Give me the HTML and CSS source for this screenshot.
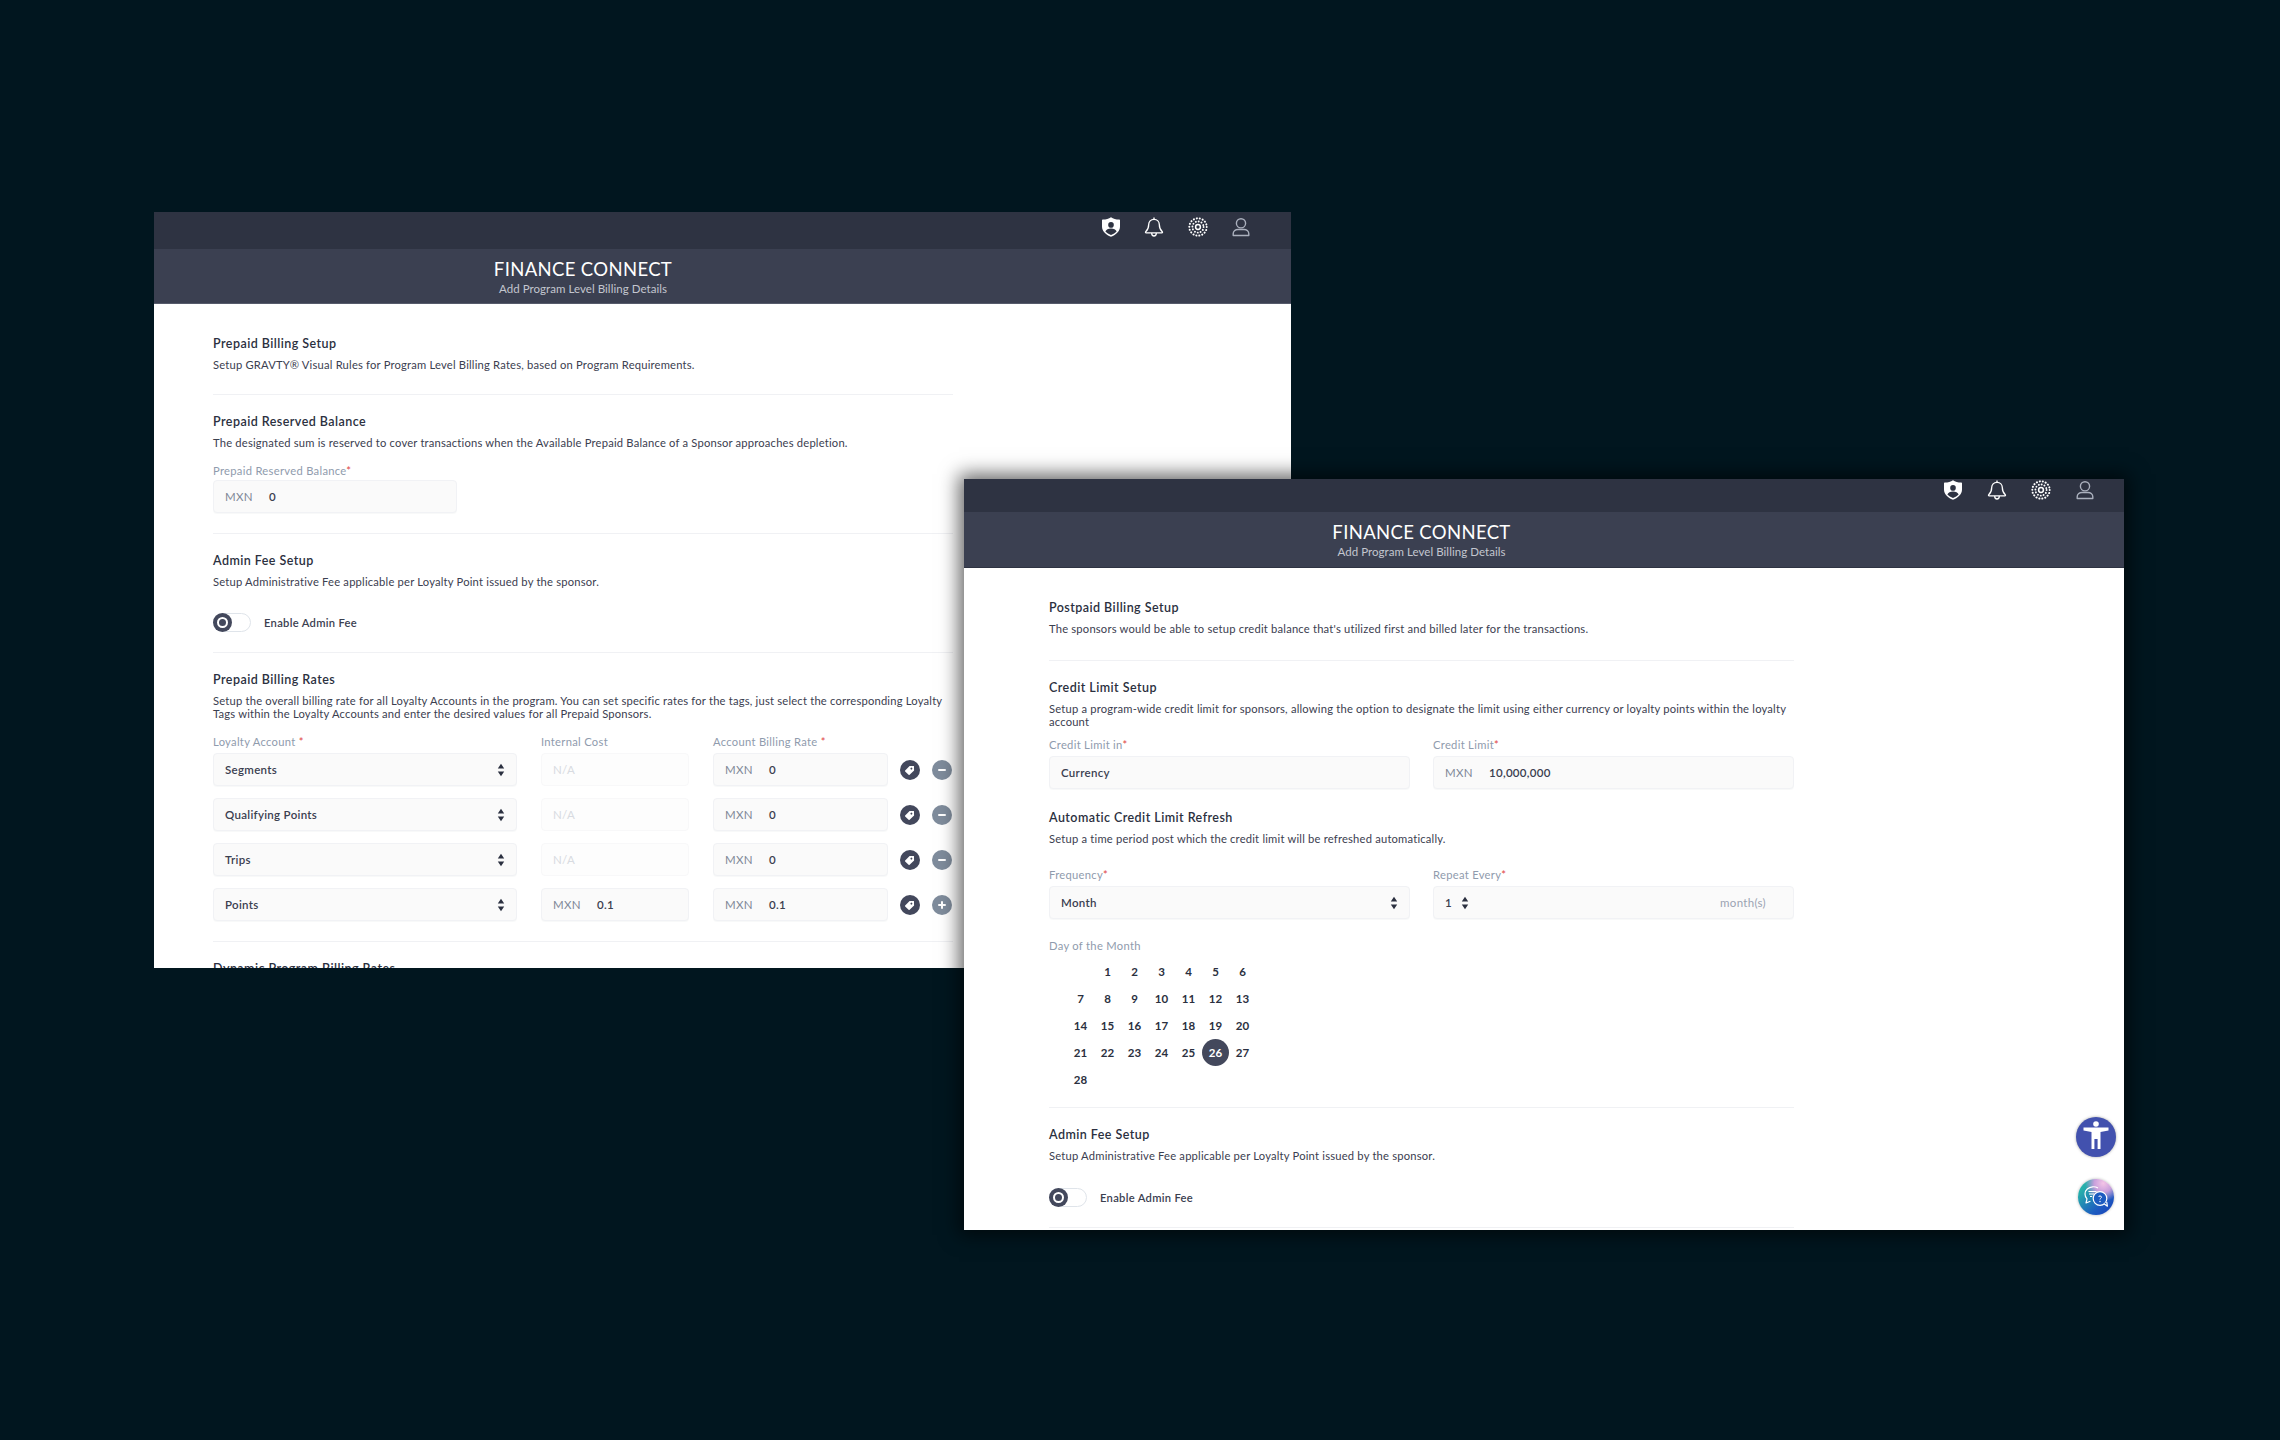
FILE: index.html
```html
<!DOCTYPE html>
<html lang="en">
<head>
  <meta charset="UTF-8" />
  <title>Finance Connect - Billing Details</title>
  <link rel="stylesheet" href="styles.css">
</head>
<body>
  <svg class="icon-defs" width="0" height="0">
    <symbol id="i-shield" viewBox="0 0 20 20">
      <path fill="#fff" d="M10 .2c2.300 1.600 4.800 2.300 8.300 2.400.4 0 .7.300.7.700v6.300c0 4.600-3.700 8.200-9 10.200-5.300-2-9-5.600-9-10.200V3.300c0-.4.300-.7.700-.7C5.200 2.500 7.700 1.800 10 .2z"/>
      <circle cx="10" cy="7.900" r="2.800" fill="#2e3342"/>
      <path fill="#2e3342" d="M4.400 14.500c.6-2 3-3.100 5.600-3.100s5 1.100 5.600 3.100c-1.400 1.400-3.300 2.500-5.600 3.400-2.300-.9-4.200-2-5.600-3.400z"/>
    </symbol>
    <symbol id="i-bell" viewBox="0 0 20 20">
      <path fill="none" stroke="#fff" stroke-width="1.300" stroke-linejoin="round" d="M10 2.300c-3.300 0-5.300 2.400-5.300 5.300 0 3.700-1.200 5.600-3 7.200-.4.400-.2 1 .4 1h15.800c.6 0 .8-.6.400-1-1.800-1.600-3-3.500-3-7.200 0-2.900-2-5.300-5.300-5.300z"/>
      <path fill="none" stroke="#fff" stroke-width="1.300" d="M10 .6v1.700M7.700 15.900c0 2 1.100 3.100 2.300 3.100s2.300-1.100 2.300-3.100"/>
    </symbol>
    <symbol id="i-gear" viewBox="0 0 20 20">
      <circle cx="10" cy="10" r="8.700" fill="none" stroke="#fff" stroke-width="2" stroke-linecap="round" stroke-dasharray="0.100 2.937"/>
      <circle cx="10" cy="10" r="5.600" fill="none" stroke="#fff" stroke-width="1.900" stroke-linecap="round" stroke-dasharray="0.100 2.830"/>
      <circle cx="10" cy="10" r="2.400" fill="none" stroke="#fff" stroke-width="1.500"/>
    </symbol>
    <symbol id="i-user" viewBox="0 0 20 20">
      <circle cx="10" cy="6.300" r="4.600" fill="none" stroke="#aab0bd" stroke-width="1.400"/>
      <path fill="none" stroke="#aab0bd" stroke-width="1.400" stroke-linejoin="round" d="M2.200 18.500v-1.700c0-2.700 2.400-4.300 4.800-4.300h6c2.400 0 4.800 1.600 4.800 4.300v1.700z"/>
    </symbol>
    <symbol id="i-tag" viewBox="0 0 20 20">
      <g transform="rotate(45 10 10)">
        <path fill="#fff" d="M10 3.800l3.500 3.300v7c0 .5-.3.800-.8.800H7.300c-.5 0-.8-.3-.8-.8v-7z"/>
        <circle cx="10" cy="7.800" r="1.100" fill="#43485c"/>
      </g>
    </symbol>
    <symbol id="i-carets" viewBox="0 0 8 14">
      <path fill="#2b3040" d="M4 .8L7.200 5.600H.8zM4 13.200L.8 8.400h6.400z"/>
    </symbol>
  </svg>

  <section class="window window-prepaid">
    <div class="topbar">
      <svg class="top-icon"><use href="#i-shield"/></svg>
      <svg class="top-icon"><use href="#i-bell"/></svg>
      <svg class="top-icon"><use href="#i-gear"/></svg>
      <svg class="top-icon"><use href="#i-user"/></svg>
    </div>
    <header class="page-head">
      <h1>FINANCE CONNECT</h1>
      <p>Add Program Level Billing Details</p>
    </header>
    <div class="page-body">
      <div class="block block-first">
        <h3>Prepaid Billing Setup</h3>
        <p class="desc">Setup GRAVTY® Visual Rules for Program Level Billing Rates, based on Program Requirements.</p>
      </div>
      <div class="block">
        <h3>Prepaid Reserved Balance</h3>
        <p class="desc">The designated sum is reserved to cover transactions when the Available Prepaid Balance of a Sponsor approaches depletion.</p>
        <label class="field-label">Prepaid Reserved Balance<b>*</b></label>
        <div class="input input-reserved"><span class="unit">MXN</span><span>0</span></div>
      </div>
      <div class="block">
        <h3>Admin Fee Setup</h3>
        <p class="desc">Setup Administrative Fee applicable per Loyalty Point issued by the sponsor.</p>
        <div class="toggle-row">
          <span class="toggle"><i></i></span>
          <span>Enable Admin Fee</span>
        </div>
      </div>
      <div class="block">
        <h3>Prepaid Billing Rates</h3>
        <p class="desc">Setup the overall billing rate for all Loyalty Accounts in the program. You can set specific rates for the tags, just select the corresponding Loyalty Tags within the Loyalty Accounts and enter the desired values for all Prepaid Sponsors.</p>
        <div class="rates">
          <label class="field-label">Loyalty Account <b>*</b></label>
          <label class="field-label">Internal Cost</label>
          <label class="field-label rates-wide">Account Billing Rate <b>*</b></label>

          <div class="input input-select">Segments<svg class="carets"><use href="#i-carets"/></svg></div>
          <div class="input input-off">N/A</div>
          <div class="input"><span class="unit">MXN</span><span>0</span></div>
          <span class="round round-dark"><svg><use href="#i-tag"/></svg></span>
          <span class="round round-grey"><i class="bar"></i></span>

          <div class="input input-select">Qualifying Points<svg class="carets"><use href="#i-carets"/></svg></div>
          <div class="input input-off">N/A</div>
          <div class="input"><span class="unit">MXN</span><span>0</span></div>
          <span class="round round-dark"><svg><use href="#i-tag"/></svg></span>
          <span class="round round-grey"><i class="bar"></i></span>

          <div class="input input-select">Trips<svg class="carets"><use href="#i-carets"/></svg></div>
          <div class="input input-off">N/A</div>
          <div class="input"><span class="unit">MXN</span><span>0</span></div>
          <span class="round round-dark"><svg><use href="#i-tag"/></svg></span>
          <span class="round round-grey"><i class="bar"></i></span>

          <div class="input input-select">Points<svg class="carets"><use href="#i-carets"/></svg></div>
          <div class="input"><span class="unit">MXN</span><span>0.1</span></div>
          <div class="input"><span class="unit">MXN</span><span>0.1</span></div>
          <span class="round round-dark"><svg><use href="#i-tag"/></svg></span>
          <span class="round round-grey"><i class="bar bar-plus"></i></span>
        </div>
      </div>
      <div class="block">
        <h3>Dynamic Program Billing Rates</h3>
      </div>
    </div>
  </section>

  <section class="window window-postpaid">
    <div class="topbar">
      <svg class="top-icon"><use href="#i-shield"/></svg>
      <svg class="top-icon"><use href="#i-bell"/></svg>
      <svg class="top-icon"><use href="#i-gear"/></svg>
      <svg class="top-icon"><use href="#i-user"/></svg>
    </div>
    <header class="page-head">
      <h1>FINANCE CONNECT</h1>
      <p>Add Program Level Billing Details</p>
    </header>
    <div class="page-body">
      <div class="block block-first block-roomy">
        <h3>Postpaid Billing Setup</h3>
        <p class="desc">The sponsors would be able to setup credit balance that's utilized first and billed later for the transactions.</p>
      </div>
      <div class="block block-credit">
        <h3>Credit Limit Setup</h3>
        <p class="desc">Setup a program-wide credit limit for sponsors, allowing the option to designate the limit using either currency or loyalty points within the loyalty account</p>
        <div class="two-col two-col-tight">
          <div>
            <label class="field-label">Credit Limit in<b>*</b></label>
            <div class="input">Currency</div>
          </div>
          <div>
            <label class="field-label">Credit Limit<b>*</b></label>
            <div class="input"><span class="unit">MXN</span><span>10,000,000</span></div>
          </div>
        </div>
        <h3 class="sub-title">Automatic Credit Limit Refresh</h3>
        <p class="desc">Setup a time period post which the credit limit will be refreshed automatically.</p>
        <div class="two-col">
          <div>
            <label class="field-label">Frequency<b>*</b></label>
            <div class="input input-select">Month<svg class="carets"><use href="#i-carets"/></svg></div>
          </div>
          <div>
            <label class="field-label">Repeat Every<b>*</b></label>
            <div class="input input-repeat">
              <span>1</span><svg class="carets"><use href="#i-carets"/></svg>
              <span class="suffix">month(s)</span>
            </div>
          </div>
        </div>
        <label class="field-label day-label">Day of the Month</label>
        <div class="days" id="days"></div>
      </div>
      <div class="block">
        <h3>Admin Fee Setup</h3>
        <p class="desc">Setup Administrative Fee applicable per Loyalty Point issued by the sponsor.</p>
        <div class="toggle-row">
          <span class="toggle"><i></i></span>
          <span>Enable Admin Fee</span>
        </div>
      </div>
    </div>

    <span class="fab fab-access">
      <svg viewBox="0 0 40 40" width="40" height="40">
        <circle cx="20" cy="7" r="2.800" fill="#fff"/>
        <path fill="#fff" d="M7.500 10.500h25v3l-8 1.400V32h-2.900V22h-3.200v10h-2.900V14.900l-8-1.400z"/>
      </svg>
    </span>
    <span class="fab fab-chat">
      <svg viewBox="0 0 36 36" width="36" height="36">
        <path fill="none" stroke="#fff" stroke-width="1.200" stroke-linejoin="round" d="M20 9c-1.700-1-3.700-1.400-5.500-1.200C10.500 8.200 7 11 7 15c0 1.900.8 3.600 2 4.900L8 24l4.400-1.800"/>
        <path fill="none" stroke="#fff" stroke-width="1.200" d="M10.500 12.500h8M11 15h5M12 17.500h2"/>
        <circle cx="22" cy="19.500" r="6.800" fill="#1c5bc0" stroke="#fff" stroke-width="1.200"/>
        <path fill="#1c5bc0" stroke="#fff" stroke-width="1.200" stroke-linejoin="round" d="M26 24.800l3.400 2.400-.7-4.300"/>
        <path fill="none" stroke="#fff" stroke-width="1" d="M20.500 17.800c.2-1 3-1.200 3 .3 0 1.100-1.500 1.100-1.500 2.400"/>
        <circle cx="22" cy="22.500" r=".7" fill="#fff"/>
      </svg>
    </span>
  </section>

  <script>
    // day of the month picker, the 1st starts on the second column
    const days = document.getElementById('days');
    for (let d = 1; d <= 28; d++) {
      const cell = document.createElement('span');
      cell.textContent = d;
      if (d === 1) cell.classList.add('day-first');
      if (d === 26) cell.classList.add('day-on');
      days.appendChild(cell);
    }
  </script>
</body>
</html>
```

FILE: styles.css
```css
* { box-sizing: border-box; margin: 0; padding: 0; }
body {
  width: 2280px; height: 1440px; position: relative; overflow: hidden;
  background: #01161f;
  font-family: 'Lato', 'Open Sans', sans-serif;
  color: #2b3040;
}
.icon-defs { position: absolute; }

.window {
  position: absolute; background: #fff; overflow: hidden;
  display: flex; flex-direction: column;
}
.window-prepaid { left: 154px; top: 212px; width: 1137px; height: 756px; --side: 59px; --col: 740px; }
.window-postpaid {
  left: 964px; top: 479px; width: 1160px; height: 751px; --side: 85px; --col: 745px;
  overflow: visible;
  box-shadow: 0 0 18px 5px rgba(0, 0, 0, 0.6);
}

.topbar {
  height: 37px; flex: none; background: #2e3342;
  display: flex; align-items: center; justify-content: flex-end;
  gap: 23.3px; padding: 0 40px 7px 0;
}
.window-postpaid .topbar { height: 33px; padding: 0 29px 12px 0; align-items: flex-end; gap: 24px; }
.top-icon { width: 20px; height: 20px; }

.page-head {
  height: 55px; flex: none; background: #3b4051;
  border-bottom: 1px solid #565b6b;
  padding-left: var(--side); width: 100%;
  color: #fff;
}
.window-postpaid .page-head { height: 56px; border-bottom-color: #2e3342; }
.page-head > * { width: var(--col); text-align: center; }
.page-head h1 { font-size: 18.5px; font-weight: 400; line-height: 22px; padding-top: 9px; box-sizing: content-box; letter-spacing: 0.35px; }
.page-head p { font-size: 11.5px; line-height: 14px; color: #c3c6cf; letter-spacing: 0.05px; margin-top: 2px; }

.page-body { padding: 13px 0 0 var(--side); width: calc(var(--side) + var(--col)); }
.block { padding: 19px 0 19px; border-bottom: 1px solid #f0f1f4; }
.block-first { padding-bottom: 23px; }
.block-roomy { padding-bottom: 25px; }
.block-credit { padding-bottom: 14px; }
.block h3 { font-size: 12.5px; line-height: 16px; font-weight: 600; letter-spacing: 0.45px; color: #2b3040; }
.desc { font-size: 11.2px; line-height: 13px; margin-top: 6px; color: #3b4050; letter-spacing: 0.2px; }

.field-label { display: block; font-size: 11.2px; line-height: 13px; color: #8f9bad; letter-spacing: 0.3px; margin: 15px 0 3px; }
.field-label b { color: #e0433f; font-weight: 400; }

.input {
  height: 33px; margin-bottom: 1px; background: #fafafa; border: 1px solid #f1f2f5; border-radius: 4px;
  display: flex; align-items: center; padding: 0 11px;
  font-size: 11.5px; font-weight: 600; letter-spacing: 0.3px; color: #3b4050;
  box-shadow: 0 1px 1px rgba(40, 50, 70, 0.03);
}
.input-reserved { width: 244px; }
.unit { width: 44px; flex: none; font-weight: 400; color: #7f8898; }
.input-off { font-weight: 400; color: #d8dbe1; background: #fdfdfd; border-color: #f8f8f9; box-shadow: none; }
.input-select { justify-content: space-between; padding-right: 11px; }
.carets { width: 8px; height: 14px; flex: none; }

.toggle-row {
  display: flex; align-items: center; gap: 13px; margin-top: 25px; padding-bottom: 1px;
  font-size: 11.2px; font-weight: 600; letter-spacing: 0.3px; color: #3b4050;
}
.window-postpaid .toggle-row { margin-top: 26px; }
.toggle { width: 38px; height: 19px; border: 1px solid #dfe4ea; border-radius: 10px; background: #fff; display: block; flex: none; position: relative; }
.toggle i {
  position: absolute; left: -1px; top: -1px; width: 19px; height: 19px; border-radius: 50%;
  background: #43485c; display: flex; align-items: center; justify-content: center;
}
.toggle i::after { content: ""; width: 7px; height: 7px; border: 2px solid #fff; border-radius: 50%; }

.rates {
  display: grid; grid-template-columns: 304px 148px 175px 20px 20px;
  column-gap: 24px; row-gap: 11px; align-items: center;
}
.rates .field-label { margin-bottom: -6px; }
.rates-wide { grid-column: 3 / 6; }
.round {
  width: 20px; height: 20px; border-radius: 50%; display: flex; align-items: center; justify-content: center;
}
.round svg { width: 18px; height: 18px; }
.round-dark { background: #43485c; margin-left: -12px; }
.round-grey { background: #7f8c9c; margin-left: -24px; }
.bar { width: 8px; height: 2px; background: #fff; border-radius: 1px; position: relative; display: block; }
.bar-plus::after { content: ""; position: absolute; left: 3px; top: -3px; width: 2px; height: 8px; background: #fff; border-radius: 1px; }

.two-col { display: grid; grid-template-columns: 361px 361px; column-gap: 23px; margin-top: 23px; }
.two-col-tight { margin-top: 10px; }
.two-col .field-label { margin: 0 0 5px; }
.sub-title { margin-top: 20px; }
.input-repeat { gap: 9px; }
.suffix { margin-left: auto; margin-right: 16px; font-weight: 400; color: #9aa3b2; }
.day-label { margin: 19px 0 6px; }

.days { display: grid; grid-template-columns: repeat(7, 27px); grid-auto-rows: 27px; margin-left: 18px; }
.days span {
  display: flex; align-items: center; justify-content: center;
  font-size: 11.5px; font-weight: 700; color: #2b3040;
}
.days .day-first { grid-column-start: 2; }
.days .day-on { background: #43485c; color: #fff; border-radius: 50%; }

.fab { position: absolute; border-radius: 50%; display: block; }
.fab svg { display: block; }
.fab-access { left: 1112px; top: 638px; width: 40px; height: 40px; background: #4251ae; box-shadow: 0 0 3px rgba(0, 0, 0, 0.35); }
.fab-chat {
  left: 1114px; top: 700px; width: 36px; height: 36px; box-shadow: 0 0 3px rgba(0, 0, 0, 0.3);
  background: radial-gradient(circle at 70% 12%, #f4c4e6 0, #c9a0dc 22%, transparent 45%),
    linear-gradient(135deg, #26b0ab 20%, #1c5bc0 68%, #1a3fb8 100%);
}
```
